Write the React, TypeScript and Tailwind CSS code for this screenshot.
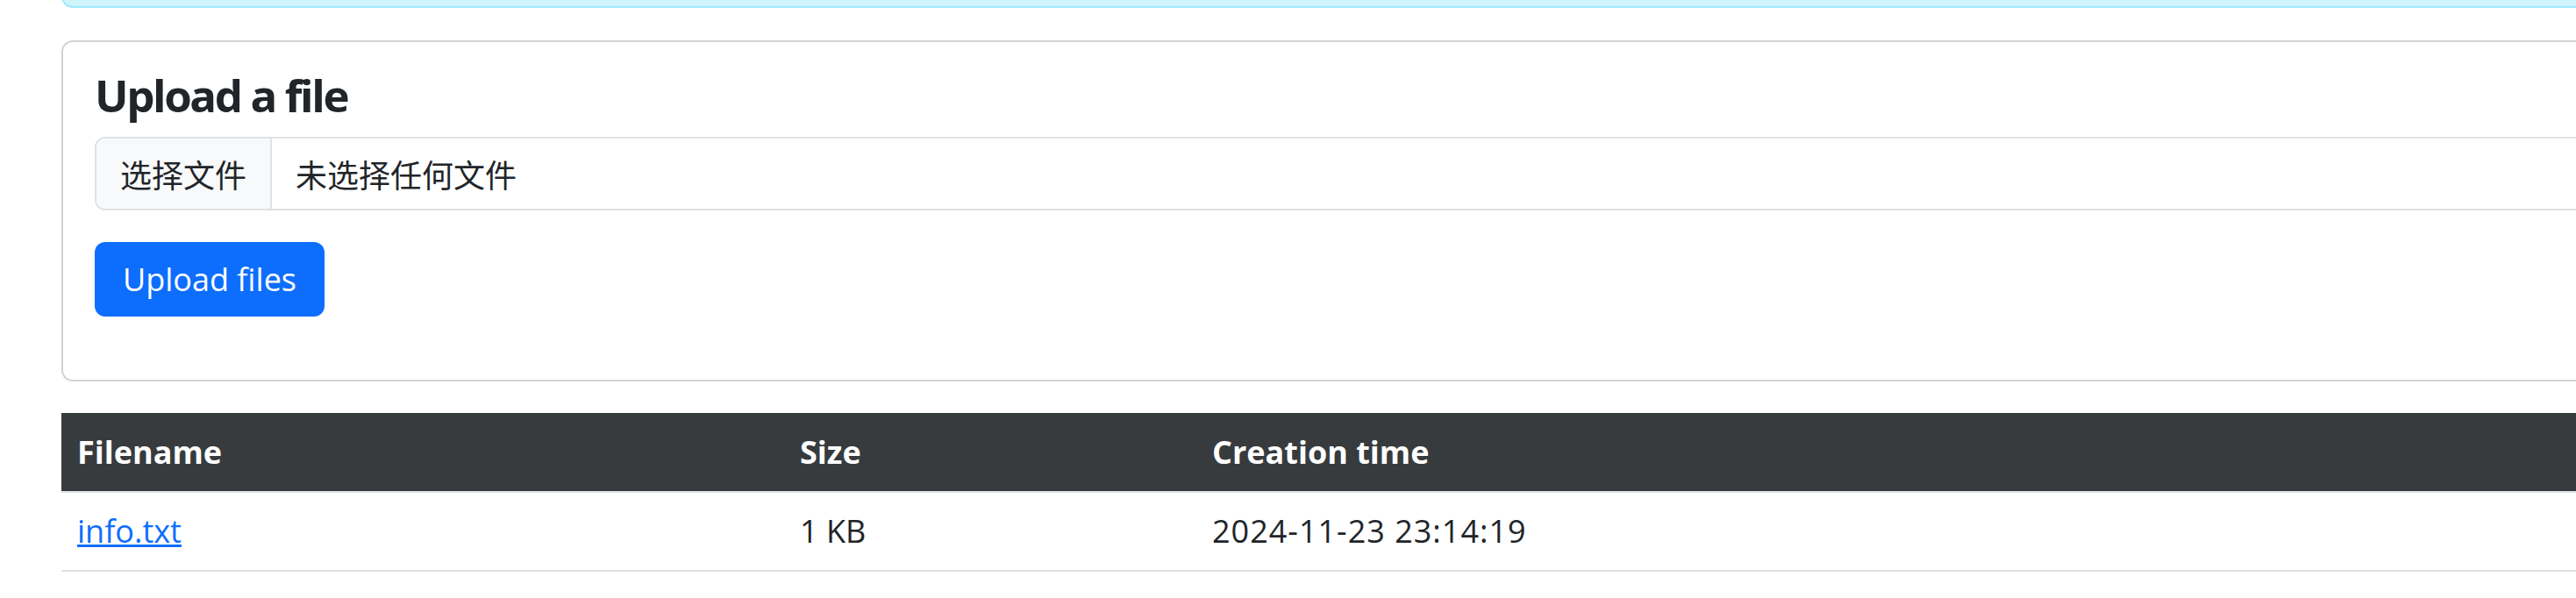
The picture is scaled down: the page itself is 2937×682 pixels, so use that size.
import React from "react";

export default function App() {
  return (
    <div className="w-full overflow-hidden bg-white font-['Open_Sans','Noto_Sans_CJK_SC',sans-serif] text-[#212529]">
      <div className="ml-[70px] w-[2950px]">
        {/* alert (scrolled mostly out of view) */}
        <div className="-mt-[50px] h-[59px] rounded-[13px] border-2 border-[#9eeaf9] bg-[#cff4fc]" />

        {/* upload card */}
        <div className="mt-[37px] rounded-[13px] border-2 border-[#d3d3d3] px-[36px] pt-[28px] pb-[72px]">
          <h4 className="h-[64px] text-[51px] font-bold leading-[64px] tracking-[-2.4px]">Upload a file</h4>
          <div className="mt-[16px] flex h-[84px] items-stretch overflow-hidden rounded-[12px] border-2 border-[#dee2e6]">
            <div className="flex items-center border-r-2 border-[#dee2e6] bg-[#f8f9fa] px-[27px] font-['Noto_Sans_CJK_SC',sans-serif] text-[36px]">
              选择文件
            </div>
            <div className="flex items-center px-[27px] font-['Noto_Sans_CJK_SC',sans-serif] text-[36px]">
              未选择任何文件
            </div>
          </div>
          <button className="mt-[36px] flex h-[85px] w-[262px] items-center justify-center rounded-[12px] bg-[#0d6efd] text-[36px] leading-[54px] text-white">
            Upload files
          </button>
        </div>

        {/* file table */}
        <table className="mt-[36px] w-[2950px] border-collapse text-left text-[36px] leading-[54px]">
          <thead>
            <tr className="h-[90px] border-b-2 border-[#dee2e6] bg-[#373b3e] text-white">
              <th className="w-[824px] px-[18px] font-bold">Filename</th>
              <th className="w-[470px] px-[18px] font-bold">Size</th>
              <th className="px-[18px] font-bold">Creation time</th>
            </tr>
          </thead>
          <tbody>
            <tr className="h-[90px] border-b-2 border-[#dee2e6]">
              <td className="px-[18px]">
                <a href="#" className="text-[#0d6efd] underline">info.txt</a>
              </td>
              <td className="px-[18px]">1 KB</td>
              <td className="px-[18px] tracking-[1px]">2024-11-23 23:14:19</td>
            </tr>
          </tbody>
        </table>
      </div>
    </div>
  );
}
